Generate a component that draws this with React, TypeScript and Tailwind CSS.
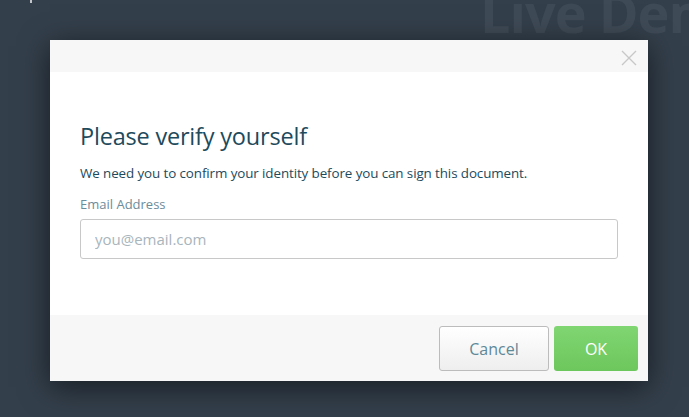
export default function App() {
  return (
    <div className="relative w-[689px] h-[417px] overflow-hidden bg-[#333f4b] font-['Open_Sans',sans-serif]">
      {/* page behind the dialog */}
      <div className="flex">
        <span className="mt-[-20px] ml-[480px] whitespace-nowrap text-[54px] leading-[64px] font-bold tracking-[-1px] text-[#3e4a56]">
          Live Demo
        </span>
      </div>
      <div className="absolute left-[30px] top-0 h-[3px] w-[2px] bg-white/70" />

      {/* dialog */}
      <div className="absolute left-[50px] top-[40px] w-[598px] flex flex-col bg-white shadow-[0_6px_28px_rgba(0,0,0,0.55)]">
        <div className="h-8 bg-[#f7f7f7] flex items-start justify-end pr-[11px] pt-[10px]">
          <svg width="16" height="16" viewBox="0 0 16 16" className="text-[#c8c8c8]">
            <path d="M1 1L15 15M15 1L1 15" stroke="currentColor" strokeWidth="1.4" fill="none" />
          </svg>
        </div>
        <div className="px-[30px] pt-[50px] pb-[56px]">
          <h2 className="text-[23.5px] leading-[28px] text-[#1d4a5c] tracking-[-0.2px]">Please verify yourself</h2>
          <p className="mt-[14px] text-[13.4px] leading-[18px] text-[#1d4a5c] tracking-[-0.1px]">
            We need you to confirm your identity before you can sign this document.
          </p>
          <label className="block mt-[13px] text-[13px] leading-[18px] text-[#6b8c9b]">Email Address</label>
          <input
            placeholder="you@email.com"
            className="mt-[6px] w-[538px] h-[40px] rounded-[3px] border border-[#c8c8c8] px-[14px] text-[15px] text-[#333] placeholder:text-[#a8b5bc] outline-none"
          />
        </div>
        <div className="h-[66px] bg-[#f7f7f7] flex justify-end items-start gap-[5px] pt-[11px] pr-[10px]">
          <button className="w-[110px] h-[45px] rounded-[3px] border border-[#bcbcbc] bg-gradient-to-b from-white to-[#eeeeee] text-[16px] text-[#5f8898]">
            Cancel
          </button>
          <button className="w-[84px] h-[45px] rounded-[3px] bg-gradient-to-b from-[#80d672] to-[#6cc75c] text-[16px] font-medium text-white">
            OK
          </button>
        </div>
      </div>
    </div>
  )
}
